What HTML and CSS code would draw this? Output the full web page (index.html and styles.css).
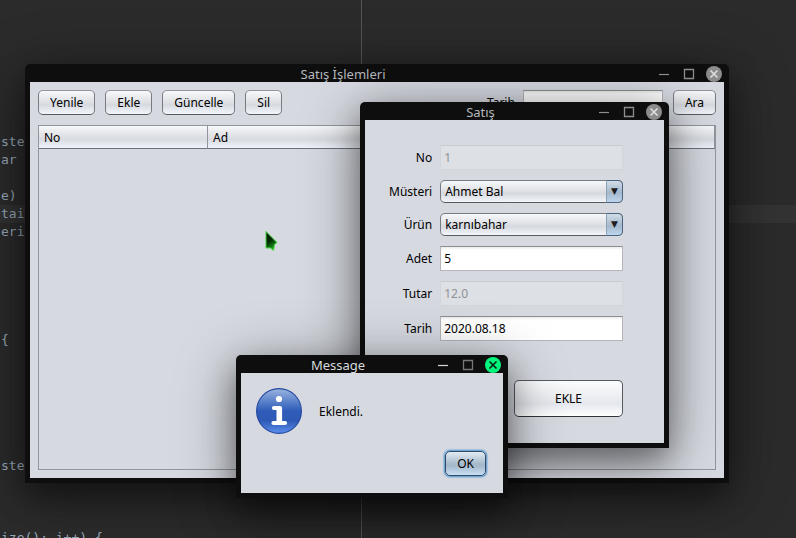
FILE: index.html
```html
<!DOCTYPE html>
<html lang="tr">
<head>
<meta charset="utf-8">
<title>Satış İşlemleri</title>
<link rel="stylesheet" href="styles.css">
</head>
<body>
<svg class="defs" aria-hidden="true">
  <symbol id="i-min" viewBox="0 0 16 16"><path d="M3 8.5h10" fill="none" stroke="currentColor" stroke-width="1.2"/></symbol>
  <symbol id="i-max" viewBox="0 0 16 16"><path d="M3.5 3.5h9v9h-9z" fill="none" stroke="currentColor" stroke-width="1.3"/></symbol>
  <symbol id="i-close" viewBox="0 0 16 16"><circle cx="8" cy="8" r="8" fill="currentColor" stroke="none"/><path d="M4.500 4.500l7 7M11.500 4.500l-7 7" fill="none" stroke-width="1.600"/></symbol>
</svg>
<main class="desktop">
  <div class="editor">
    <pre class="code">





 

ste
ar

e)
<span class="current">tai</span>eri





{






ste



ize(); i++) {</pre>
  </div>

  <section class="window window-main">
    <header class="titlebar">
      <h1 class="title">Satış İşlemleri</h1>
      <div class="controls">
        <button class="control" aria-label="Minimize"><svg><use href="#i-min"/></svg></button>
        <button class="control" aria-label="Maximize"><svg><use href="#i-max"/></svg></button>
        <button class="control close" aria-label="Close"><svg><use href="#i-close"/></svg></button>
      </div>
    </header>
    <div class="content list">
      <div class="toolbar">
        <button class="btn">Yenile</button>
        <button class="btn">Ekle</button>
        <button class="btn">Güncelle</button>
        <button class="btn">Sil</button>
        <div class="search">
          <label for="search-date">Tarih</label>
          <input class="field" id="search-date" type="text">
        </div>
        <button class="btn">Ara</button>
      </div>
      <div class="table-pane">
        <table class="table">
          <thead><tr><th class="col-no">No</th><th>Ad</th></tr></thead>
        </table>
      </div>
    </div>
  </section>

  <svg class="pointer" viewBox="0 0 16 24" aria-hidden="true">
    <defs><linearGradient id="pg" x1="0" y1="0" x2="0.4" y2="1"><stop offset="0" stop-color="#001500"/><stop offset=".55" stop-color="#032c03"/><stop offset="1" stop-color="#19a219"/></linearGradient></defs>
    <path d="M2 1.500L13 12.500 10.500 14.500 9.500 20.500 6.500 18 2 18z" fill="url(#pg)" stroke="#46d946" stroke-width="1"/>
  </svg>

  <section class="window window-sale">
    <header class="titlebar">
      <h2 class="title">Satış</h2>
      <div class="controls">
        <button class="control" aria-label="Minimize"><svg><use href="#i-min"/></svg></button>
        <button class="control" aria-label="Maximize"><svg><use href="#i-max"/></svg></button>
        <button class="control close" aria-label="Close"><svg><use href="#i-close"/></svg></button>
      </div>
    </header>
    <form class="content sale-form">
      <label for="no">No</label>
      <input class="field" id="no" type="text" value="1" disabled>
      <label for="customer">Müsteri</label>
      <div class="combo"><select id="customer"><option>Ahmet Bal</option></select></div>
      <label for="product">Ürün</label>
      <div class="combo"><select id="product"><option>karnıbahar</option></select></div>
      <label for="quantity">Adet</label>
      <input class="field" id="quantity" type="text" value="5">
      <label for="amount">Tutar</label>
      <input class="field" id="amount" type="text" value="12.0" disabled>
      <label for="date">Tarih</label>
      <input class="field" id="date" type="text" value="2020.08.18">
      <button class="btn btn-large" type="button">EKLE</button>
    </form>
  </section>

  <section class="window window-message">
    <header class="titlebar">
      <h2 class="title">Message</h2>
      <div class="controls">
        <button class="control" aria-label="Minimize"><svg><use href="#i-min"/></svg></button>
        <button class="control dim" aria-label="Maximize"><svg><use href="#i-max"/></svg></button>
        <button class="control close" aria-label="Close"><svg><use href="#i-close"/></svg></button>
      </div>
    </header>
    <div class="content message">
      <div class="notice">
        <svg class="info" viewBox="0 0 46 46" aria-hidden="true">
          <defs><linearGradient id="ig" x1="0" y1="0" x2="0" y2="1"><stop offset="0" stop-color="#9db5e0"/><stop offset=".25" stop-color="#6288cd"/><stop offset=".5" stop-color="#2f5cb8"/><stop offset=".72" stop-color="#2e5ab5"/><stop offset="1" stop-color="#5c90ee"/></linearGradient></defs>
          <circle cx="23" cy="23" r="22.400" fill="url(#ig)" stroke="#2348a0" stroke-width="1.100"/>
          <circle cx="23" cy="11" r="3.100" fill="#fff"/>
          <path d="M18 20h6v15M17.500 35h11.500" fill="none" stroke="#fff" stroke-width="4.200" stroke-linecap="round" stroke-linejoin="round"/>
          <path d="M20.500 20h5.500v15h-5.500z" fill="#fff"/>
        </svg>
        <p>Eklendi.</p>
      </div>
      <button class="btn btn-default">OK</button>
    </div>
  </section>
</main>
</body>
</html>
```
FILE: styles.css
```css
* { box-sizing: border-box; }

body {
  margin: 0;
  background: #2b2b2b;
  color: #000;
  font: 12px/17px "Noto Sans", sans-serif;
}

button, input, select { font: inherit; color: inherit; margin: 0; }

.defs { position: absolute; width: 0; height: 0; }

.desktop {
  position: relative;
  height: 100vh;
  overflow: hidden;
}

/* Editor behind the windows */
.editor {
  height: 100%;
  overflow: hidden;
  background: linear-gradient(#555, #555) 361px 0 / 1px 100% no-repeat #2b2b2b;
}

.code {
  margin: 0;
  padding: 7px 0 0 1px;
  color: #98a9b9;
  font: 13px/18px "DejaVu Sans Mono", monospace;
}

.current {
  display: block;
  margin-left: -1px;
  padding-left: 1px;
  background: #333;
}

/* Windows */
.window {
  position: absolute;
  display: flex;
  flex-direction: column;
  padding: 0 5px 5px;
  background: #0d0e0d;
  border-radius: 5px 5px 0 0;
  box-shadow:
    0 14px 30px rgba(0, 0, 0, .35),
    0 10px 60px rgba(0, 0, 0, .4);
}

.window-main { left: 25px; top: 64px; width: 704px; }
.window-sale { left: 360px; top: 102px; width: 309px; }
.window-message { left: 236px; top: 355px; width: 272px; }

.titlebar { display: flex; align-items: center; height: 18px; }

.title {
  flex: 1;
  margin: 0;
  color: #b5b8bc;
  font-size: 13px;
  line-height: 20px;
  font-weight: 400;
  text-align: center;
  padding-top: 2px;
}

.controls { display: flex; gap: 9px; padding: 2px 2px 0 0; }

.control {
  width: 16px;
  height: 16px;
  padding: 0;
  border: 0;
  background: none;
  color: #8e8e8e;
}

.control svg { display: block; width: 16px; height: 16px; }
.close { color: #8c8c8c; stroke: #dedede; }
.window-message .title { color: #d8dadd; }
.window-message .control { color: #d8d8d8; }
.window-message .dim { color: #777; }
.window-message .close { color: #00f57c; stroke: #08230f; }

.content { background: #d6d9e0; }

/* Buttons and fields */
.btn {
  height: 25px;
  padding: 0 11px;
  border: 1px solid #777b82;
  border-top-color: #92959b;
  border-bottom-color: #565a61;
  border-radius: 5px;
  background: linear-gradient(#f7f8fa, #e0e2e6 45%, #d6d9df 60%, #f3f6fb);
  white-space: nowrap;
}

.field {
  width: 100%;
  min-width: 0;
  height: 25px;
  padding: 0 3px;
  border: 1px solid #b5b6b9;
  border-top-color: #8c8d90;
  border-radius: 0;
  background: linear-gradient(#ececec, #fff 3px);
}

.field:disabled {
  border-color: #d2d5d9;
  border-top-color: #c8cbd0;
  background: #dde0e4;
  color: #8e9297;
}

.list { padding: 8px; }
.toolbar { display: flex; gap: 10px; }

.search {
  display: flex;
  align-items: center;
  gap: 8px;
  margin-left: auto;
}

.search .field { width: 140px; }

.table-pane {
  height: 345px;
  margin-top: 10px;
  border: 1px solid #92959d;
}

.table { width: 100%; border-spacing: 0; table-layout: fixed; }

.table th {
  height: 23px;
  padding: 0 5px;
  border-right: 1px solid #92959d;
  border-bottom: 1px solid #6d7078;
  background: linear-gradient(#f7f8fa, #e2e4e8 40%, #d8dbe0 60%, #eff3fc);
  font-weight: 400;
  text-align: left;
}

.table .col-no { width: 25%; }

/* Sale form */
.sale-form {
  display: grid;
  grid-template-columns: auto 1fr;
  gap: 10px 8px;
  align-items: center;
  padding: 25px 41px 26px 24px;
}

.sale-form label { text-align: right; }

.combo {
  display: grid;
  grid-template-columns: 1fr 17px;
  height: 23px;
}

.combo select {
  grid-area: 1 / 1 / 2 / 3;
  padding: 0 4px;
  border: 1px solid #777b82;
  border-bottom-color: #565a61;
  border-radius: 5px;
  appearance: none;
  background: linear-gradient(#f7f8fa, #e0e2e6 45%, #d6d9df 60%, #f3f6fb);
}

.combo::after {
  content: "▼";
  grid-area: 1 / 2;
  z-index: 1;
  border: 1px solid #4b6580;
  border-left-color: #8ba1b5;
  border-radius: 0 5px 5px 0;
  background: linear-gradient(#d1dde7, #a5b9cb 55%, #bdd5ed);
  color: #1d1d1d;
  font: 9px/21px "DejaVu Sans", sans-serif;
  text-align: center;
  pointer-events: none;
}

.btn-large {
  grid-column: 2;
  justify-self: end;
  width: 109px;
  height: 37px;
  margin-top: 29px;
  border-color: #565a61;
  border-bottom-color: #303338;
  background: linear-gradient(#fbfcfd, #eceef2 45%, #e5e8ee 65%, #fff);
}

/* Message */
.message { padding: 15px 17px 17px 15px; }
.notice { display: flex; align-items: center; gap: 17px; }
.notice p { margin: 0; }
.info { width: 46px; height: 46px; }

.btn-default {
  display: block;
  margin: 17px 0 0 auto;
  border-color: #2f4b66;
  background: linear-gradient(#e3ebf2, #a9bccd 50%, #a3b8ca 60%, #c9dff5);
  box-shadow: 0 0 0 1px #73a4d1, 0 0 1px 2px #9fbfdc;
}

.pointer {
  position: absolute;
  left: 264px;
  top: 230px;
  width: 16px;
  height: 24px;
}
```
